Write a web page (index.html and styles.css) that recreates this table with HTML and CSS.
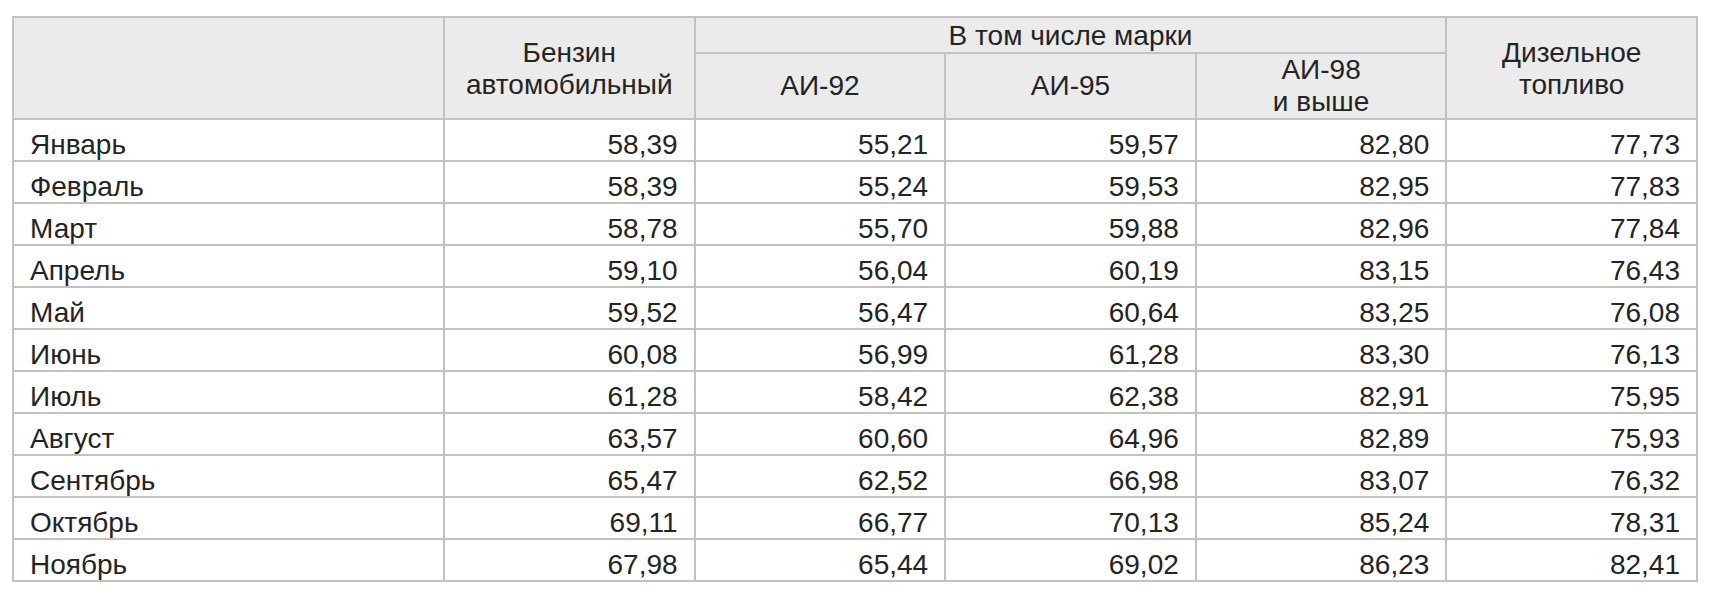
FILE: index.html
```html
<!DOCTYPE html>
<html lang="ru">
<head>
<meta charset="utf-8">
<link rel="stylesheet" href="styles.css">
</head>
<body>
<table class="prices">
  <colgroup>
    <col class="c-month">
    <col class="c-num">
    <col class="c-num">
    <col class="c-num">
    <col class="c-num">
    <col class="c-num">
  </colgroup>
  <thead>
    <tr class="h1">
      <th rowspan="2"></th>
      <th rowspan="2">Бензин<br>автомобильный</th>
      <th colspan="3">В том числе марки</th>
      <th rowspan="2">Дизельное<br>топливо</th>
    </tr>
    <tr class="h2">
      <th>АИ-92</th>
      <th>АИ-95</th>
      <th>АИ-98<br>и выше</th>
    </tr>
  </thead>
  <tbody>
    <tr><td>Январь</td><td>58,39</td><td>55,21</td><td>59,57</td><td>82,80</td><td>77,73</td></tr>
    <tr><td>Февраль</td><td>58,39</td><td>55,24</td><td>59,53</td><td>82,95</td><td>77,83</td></tr>
    <tr><td>Март</td><td>58,78</td><td>55,70</td><td>59,88</td><td>82,96</td><td>77,84</td></tr>
    <tr><td>Апрель</td><td>59,10</td><td>56,04</td><td>60,19</td><td>83,15</td><td>76,43</td></tr>
    <tr><td>Май</td><td>59,52</td><td>56,47</td><td>60,64</td><td>83,25</td><td>76,08</td></tr>
    <tr><td>Июнь</td><td>60,08</td><td>56,99</td><td>61,28</td><td>83,30</td><td>76,13</td></tr>
    <tr><td>Июль</td><td>61,28</td><td>58,42</td><td>62,38</td><td>82,91</td><td>75,95</td></tr>
    <tr><td>Август</td><td>63,57</td><td>60,60</td><td>64,96</td><td>82,89</td><td>75,93</td></tr>
    <tr><td>Сентябрь</td><td>65,47</td><td>62,52</td><td>66,98</td><td>83,07</td><td>76,32</td></tr>
    <tr><td>Октябрь</td><td>69,11</td><td>66,77</td><td>70,13</td><td>85,24</td><td>78,31</td></tr>
    <tr><td>Ноябрь</td><td>67,98</td><td>65,44</td><td>69,02</td><td>86,23</td><td>82,41</td></tr>
  </tbody>
</table>
</body>
</html>
```
FILE: styles.css
```css
html, body {
  margin: 0;
  padding: 0;
  background: #ffffff;
}
body {
  padding: 16px 0 0 12px;
  font-family: "Liberation Sans", Arial, sans-serif;
  font-size: 28px;
  color: #242424;
}
.prices {
  border-collapse: collapse;
  table-layout: fixed;
  width: 1686px;
}
.c-month { width: 431px; }
.prices th,
.prices td {
  border: 2px solid #c2c2c2;
  padding: 0 16px;
}
.prices th {
  background: #ebebeb;
  font-weight: normal;
  text-align: center;
  vertical-align: middle;
  line-height: 32px;
}
.h1 th { padding-top: 2px; }
.h2 th { padding-top: 0; }
.prices td {
  line-height: 30px;
  padding-top: 10px;
  text-align: right;
  vertical-align: top;
  white-space: nowrap;
}
.prices td:first-child {
  text-align: left;
}
```
